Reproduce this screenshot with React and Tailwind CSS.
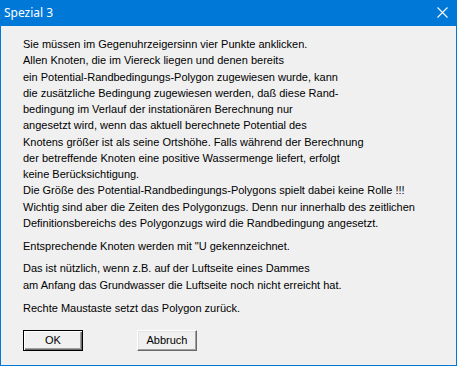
import React from "react";

const para1 = [
  "Sie müssen im Gegenuhrzeigersinn vier Punkte anklicken.",
  "Allen Knoten, die im Viereck liegen und denen bereits",
  "ein Potential-Randbedingungs-Polygon zugewiesen wurde, kann",
  "die zusätzliche Bedingung zugewiesen werden, daß diese Rand-",
  "bedingung im Verlauf der instationären Berechnung nur",
  "angesetzt wird, wenn das aktuell berechnete Potential des",
  "Knotens größer ist als seine Ortshöhe. Falls während der Berechnung",
  "der betreffende Knoten eine positive Wassermenge liefert, erfolgt",
  "keine Berücksichtigung.",
  "Die Größe des Potential-Randbedingungs-Polygons spielt dabei keine Rolle !!!",
  "Wichtig sind aber die Zeiten des Polygonzugs. Denn nur innerhalb des zeitlichen",
  "Definitionsbereichs des Polygonzugs wird die Randbedingung angesetzt.",
];

function Lines({ lines, className = "" }) {
  return (
    <div className={"flex flex-col " + className}>
      {lines.map((l, i) => (
        <div key={i} className="h-[16.25px] leading-[16.25px] whitespace-pre">
          {l}
        </div>
      ))}
    </div>
  );
}

export default function App() {
  return (
    <div className="w-[458px] h-[367px] bg-white">
      <div className="w-[457px] h-[366px] flex flex-col bg-[#f0f0f0] border border-t-0 border-[#0078d7] rounded-tr-[2px]">
        <div className="h-[26px] shrink-0 bg-[#0078d7] flex items-center justify-between pl-[4px] pr-[9px] -mx-px">
          <span
            className="text-white text-[12px] leading-none pb-[1px]"
            style={{ fontFamily: '"Segoe UI", "Noto Sans", sans-serif' }}
          >
            Spezial 3
          </span>
          <svg width="11" height="11" viewBox="0 0 11 11" className="mb-[1px]">
            <path d="M0.5 0.5 L10.5 10.5 M10.5 0.5 L0.5 10.5" stroke="#ffffff" strokeWidth="1.1" />
          </svg>
        </div>
        <div
          className="flex flex-col pl-[22px] pt-[10px] text-[11px] text-black"
          style={{ fontFamily: '"Liberation Sans", Arial, sans-serif' }}
        >
          <Lines lines={para1} />
          <Lines lines={["Entsprechende Knoten werden mit \"U gekennzeichnet."]} className="mt-[7px]" />
          <Lines
            lines={[
              "Das ist nützlich, wenn z.B. auf der Luftseite eines Dammes",
              "am Anfang das Grundwasser die Luftseite noch nicht erreicht hat.",
            ]}
            className="mt-[6px]"
          />
          <Lines lines={["Rechte Maustaste setzt das Polygon zurück."]} className="mt-[7px]" />
          <div className="flex gap-[54px] mt-[14px]">
            <button className="w-[60px] h-[21px] bg-[#f0f0f0] border border-black shadow-[inset_1px_1px_#ffffff,inset_-1px_-1px_#696969,inset_-2px_-2px_#a0a0a0] flex items-center justify-center leading-none text-[11px]">
              OK
            </button>
            <button className="w-[60px] h-[21px] bg-[#f0f0f0] border border-t-white border-l-white border-b-[#696969] border-r-[#696969] shadow-[inset_-1px_-1px_#a0a0a0,inset_1px_1px_#e3e3e3] flex items-center justify-center leading-none text-[11px]">
              Abbruch
            </button>
          </div>
        </div>
      </div>
    </div>
  );
}
